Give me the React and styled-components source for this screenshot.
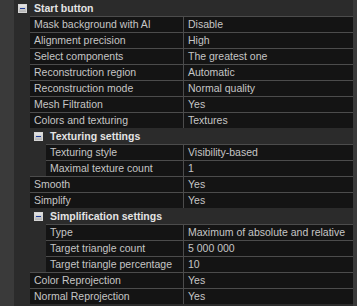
import React from "react";
import styled, { createGlobalStyle } from "styled-components";

const Global = createGlobalStyle`
  html, body { margin: 0; padding: 0; background: #2b2b2b; }
  body { font-family: "Liberation Sans", Arial, sans-serif; }
`;

const Frame = styled.div`
  display: flex;
  width: 357px;
  height: 306px;
  background: #2b2b2b;
  overflow: hidden;
`;

const Gutter = styled.div`
  width: ${(p) => p.$w}px;
  flex: none;
  background: #3a3a3a;
`;

const Tree = styled.div`
  flex: 1;
  display: flex;
  flex-direction: column;
  background: #2b2b2b;
`;

const Header = styled.div`
  display: flex;
  align-items: center;
  height: 16px;
  box-sizing: border-box;
  padding-left: ${(p) => 4 + p.$level * 16}px;
  gap: 7px;
  color: #e4e4e4;
  font-weight: bold;
  font-size: 10.5px;
  line-height: 16px;
  white-space: nowrap;
`;

const Toggle = styled.span`
  position: relative;
  width: 9px;
  height: 9px;
  box-sizing: border-box;
  border: 1px solid #d6d6d6;
  background: linear-gradient(#e6e6e6, #b4b4b4);
  flex: none;
  &::after {
    content: "";
    position: absolute;
    left: 1px;
    top: 3px;
    width: 5px;
    height: 1px;
    background: #1e3c9a;
  }
`;

const Row = styled.div`
  display: flex;
  height: 16px;
  box-sizing: border-box;
  margin-left: ${(p) => 16 + p.$level * 16}px;
  border-top: 1px solid #4c4c4c;
  background: #141414;
  color: #c6c6c6;
  font-size: 10.5px;
  line-height: 15px;
  white-space: nowrap;
`;

const Name = styled.div`
  width: ${(p) => 154 - p.$level * 16}px;
  box-sizing: border-box;
  flex: none;
  padding-left: 4px;
  border-right: 1px solid #4c4c4c;
  overflow: hidden;
`;

const Value = styled.div`
  flex: 1;
  padding-left: 4px;
  overflow: hidden;
`;

const data = [
  { h: "Start button", level: 0 },
  { n: "Mask background with AI", v: "Disable" },
  { n: "Alignment precision", v: "High" },
  { n: "Select components", v: "The greatest one" },
  { n: "Reconstruction region", v: "Automatic" },
  { n: "Reconstruction mode", v: "Normal quality" },
  { n: "Mesh Filtration", v: "Yes" },
  { n: "Colors and texturing", v: "Textures" },
  { h: "Texturing settings", level: 1 },
  { n: "Texturing style", v: "Visibility-based", level: 1 },
  { n: "Maximal texture count", v: "1", level: 1 },
  { n: "Smooth", v: "Yes" },
  { n: "Simplify", v: "Yes" },
  { h: "Simplification settings", level: 1 },
  { n: "Type", v: "Maximum of absolute and relative", level: 1 },
  { n: "Target triangle count", v: "5 000 000", level: 1 },
  { n: "Target triangle percentage", v: "10", level: 1 },
  { n: "Color Reprojection", v: "Yes" },
  { n: "Normal Reprojection", v: "Yes" },
];

export default function App() {
  return (
    <>
      <Global />
      <Frame>
        <Gutter $w={14} />
        <Tree>
          {data.map((d, i) =>
            d.h ? (
              <Header key={i} $level={d.level}>
                <Toggle />
                {d.h}
              </Header>
            ) : (
              <Row key={i} $level={d.level || 0}>
                <Name $level={d.level || 0}>{d.n}</Name>
                <Value>{d.v}</Value>
              </Row>
            )
          )}
        </Tree>
        <Gutter $w={4} />
      </Frame>
    </>
  );
}
